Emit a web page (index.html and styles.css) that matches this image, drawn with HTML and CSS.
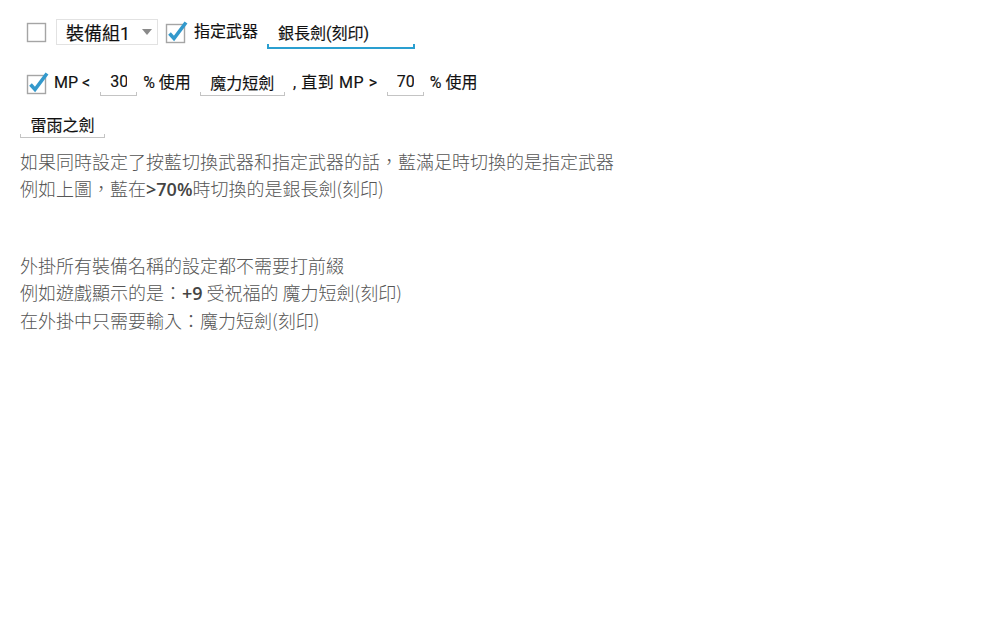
FILE: index.html
```html
<!DOCTYPE html>
<html lang="zh-Hant">
<head>
  <meta charset="UTF-8">
  <meta name="viewport" content="width=device-width, initial-scale=1.0">
  <title>裝備設定</title>
  <link rel="stylesheet" href="styles.css">
</head>
<body>
  <div class="settings">
    <div class="row row-first">
      <span class="check"><svg viewBox="0 0 24 24" width="24" height="24"><rect x="2.5" y="3.5" width="18" height="18" fill="none" stroke="#a5a5a5" stroke-width="1.4"/></svg></span>
      <div class="select">
        <span>裝備組1</span>
        <svg class="caret" viewBox="0 0 10 6" width="10" height="6"><path d="M0 0 L10 0 L5 6 Z" fill="#8a8a8a"/></svg>
      </div>
      <span class="check"><svg viewBox="0 0 24 24" width="24" height="24"><rect x="2.5" y="4.5" width="18" height="18" fill="none" stroke="#a5a5a5" stroke-width="1.4"/><path d="M5.5 13.5 L10 18.5 L22 2.5" fill="none" stroke="#3399cc" stroke-width="3.6" stroke-linejoin="miter"/></svg></span>
      <span class="label">指定武器</span>
      <input class="field field-active field-weapon" type="text" value="銀長劍(刻印)">
    </div>

    <div class="row row-second">
      <span class="check"><svg viewBox="0 0 24 24" width="24" height="24"><rect x="2.5" y="4.5" width="18" height="18" fill="none" stroke="#a5a5a5" stroke-width="1.4"/><path d="M5.5 13.5 L10 18.5 L22 2.5" fill="none" stroke="#3399cc" stroke-width="3.6" stroke-linejoin="miter"/></svg></span>
      <span class="label label-mp">MP &lt;</span>
      <input class="field field-num" type="text" value="30">
      <span class="label label-pct">% 使用</span>
      <input class="field field-name" type="text" value="魔力短劍">
      <span class="label label-until">, 直到 MP &gt;</span>
      <input class="field field-num" type="text" value="70">
      <span class="label label-pct">% 使用</span>
    </div>

    <div class="row row-third">
      <input class="field field-name" type="text" value="雷雨之劍">
    </div>
  </div>

  <div class="notes">
    <p>如果同時設定了按藍切換武器和指定武器的話，藍滿足時切換的是指定武器<br>例如上圖，藍在<span class="latin">&gt;70%</span>時切換的是銀長劍(刻印)</p>
    <p>外掛所有裝備名稱的設定都不需要打前綴<br>例如遊戲顯示的是：<span class="latin">+9</span> 受祝福的 魔力短劍(刻印)<br>在外掛中只需要輸入：魔力短劍(刻印)</p>
  </div>
</body>
</html>
```

FILE: styles.css
```css
:root {
  --text-dark: #111111;
  --text-note: #555555;
  --line-gray: #c4c4c4;
  --line-blue: #2a9fd0;
  --font-ui: Roboto, 'Noto Sans CJK TC', sans-serif;
  --font-note: 'Noto Sans CJK TC', 'Noto Sans', sans-serif;
}

*, *::before, *::after {
  box-sizing: border-box;
}

body {
  margin: 0;
  padding: 19px 20px;
  font-family: var(--font-ui);
  background: #ffffff;
  color: var(--text-dark);
}

.row {
  display: flex;
  align-items: center;
}

.row-first {
  height: 26px;
  padding-left: 5px;
}
.row-second {
  margin-top: 25px;
  height: 26px;
  padding-left: 5px;
}
.row-third {
  margin-top: 16px;
  height: 26px;
}

.check {
  display: flex;
  width: 24px;
  height: 24px;
}

.label {
  font-size: 16px;
  line-height: 20px;
  white-space: nowrap;
  -webkit-text-stroke: 0.15px currentColor;
}

.select {
  display: flex;
  align-items: center;
  justify-content: space-between;
  width: 102px;
  height: 26px;
  margin: 0 6px 0 7px;
  padding: 0 5px 0 9px;
  border: 1px solid #e2e2e2;
  font-size: 18px;
  -webkit-text-stroke: 0.15px currentColor;
}
.select .caret {
  margin-bottom: 1px;
}

.row-first .label {
  margin: 0 9px 0 6px;
}

.field {
  height: 26px;
  border: none;
  outline: none;
  padding: 0 10px 3px;
  font-family: var(--font-ui);
  font-size: 16px;
  color: var(--text-dark);
  -webkit-text-stroke: 0.15px currentColor;
  background:
    linear-gradient(var(--line-gray), var(--line-gray)) left bottom / 100% 1px no-repeat,
    linear-gradient(var(--line-gray), var(--line-gray)) left bottom / 1px 4px no-repeat,
    linear-gradient(var(--line-gray), var(--line-gray)) right bottom / 1px 4px no-repeat;
}

.field-active {
  background:
    linear-gradient(var(--line-blue), var(--line-blue)) left bottom / 100% 2px no-repeat,
    linear-gradient(var(--line-blue), var(--line-blue)) left bottom / 2px 5px no-repeat,
    linear-gradient(var(--line-blue), var(--line-blue)) right bottom / 2px 5px no-repeat;
}

.field-weapon {
  width: 148px;
  height: 30px;
  padding: 0 11px 4px;
  margin-top: 4px;
}

.field-num {
  width: 37px;
  text-align: center;
}

.field-name {
  width: 85px;
  text-align: center;
}

.label-mp {
  margin: 0 10px 0 5px;
}
.label-pct {
  margin: 0 9px 0 6px;
}
.label-until {
  margin: 0 9px 0 8px;
  letter-spacing: 0.6px;
}

.notes {
  margin-top: 10px;
  font-family: var(--font-note);
  color: var(--text-note);
}

.notes p {
  margin: 0 0 49px;
  font-size: 18px;
  line-height: 27px;
  font-weight: 300;
}

.notes .latin {
  font-family: 'Open Sans', sans-serif;
  font-weight: 600;
  color: #444444;
}
```
